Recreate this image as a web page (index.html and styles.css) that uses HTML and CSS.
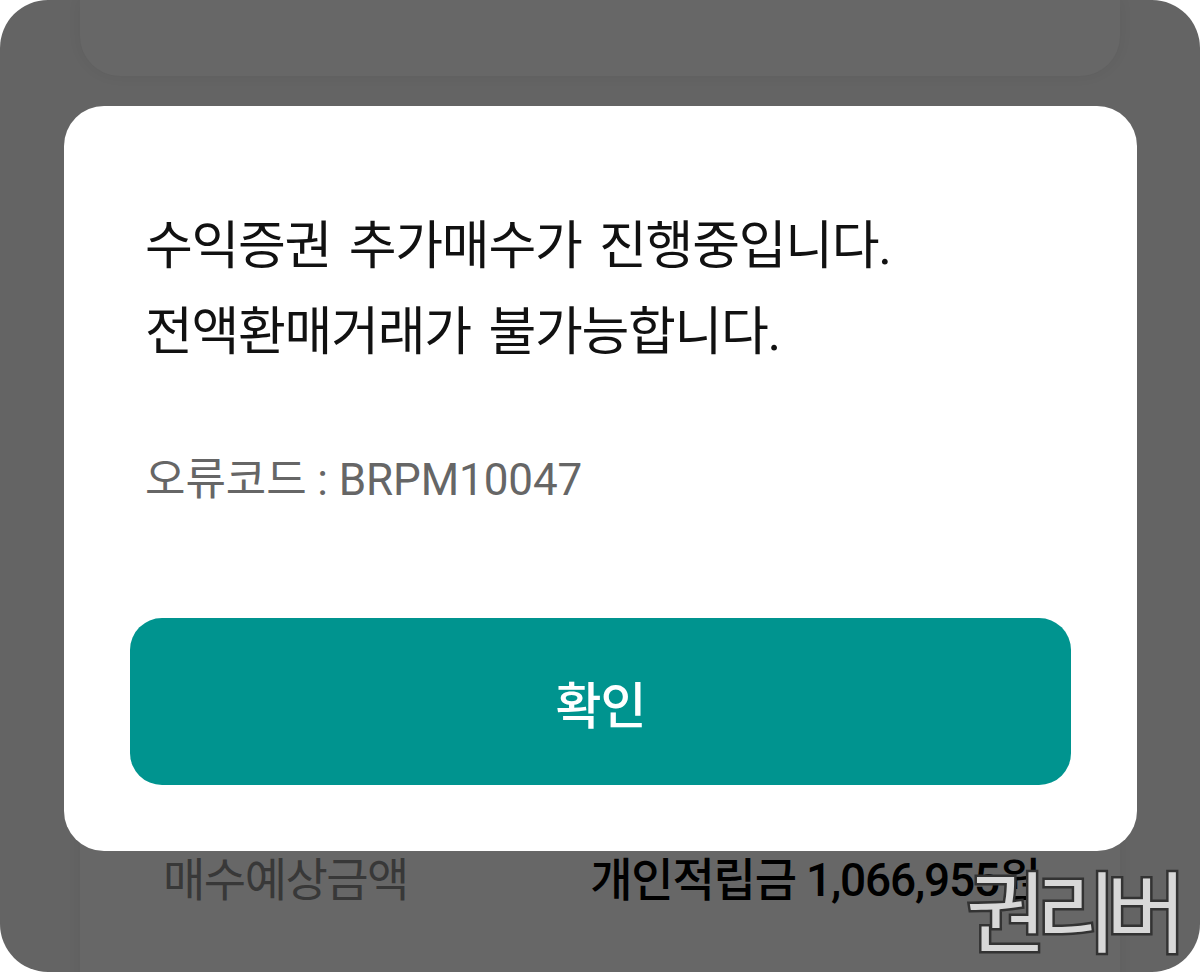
FILE: index.html
```html
<!DOCTYPE html>
<html lang="ko">
<head>
<meta charset="utf-8">
<link rel="stylesheet" href="styles.css">
</head>
<body>
<div class="screen">
  <div class="page">
    <div class="card card-top"></div>
    <div class="card card-bottom">
      <div class="row">
        <span class="row-label">매수예상금액</span>
        <span class="row-value">개인적립금 1,066,955원</span>
      </div>
    </div>
  </div>
  <div class="dialog">
    <div class="message">
      <p class="msg-line">수익증권 추가매수가 진행중입니다.</p>
      <p class="msg-line">전액환매거래가 불가능합니다.</p>
    </div>
    <p class="code">오류코드 : BRPM10047</p>
    <button class="btn">확인</button>
  </div>
  <div class="watermark">권리버</div>
</div>
</body>
</html>
```

FILE: styles.css
```css
* { box-sizing: border-box; }
html, body { margin: 0; padding: 0; background: #ffffff; }
body { font-family: Roboto, "Noto Sans CJK KR", sans-serif; }

.screen {
  position: relative;
  width: 1200px;
  height: 972px;
  background: #646464;
  border-radius: 48px;
  overflow: hidden;
}

.page {
  display: flex;
  flex-direction: column;
  padding: 0 80px;
  gap: 620px;
}

.card {
  background: #676767;
  box-shadow: 0 0 14px rgba(0, 0, 0, 0.06);
}

.card-top {
  height: 76px;
  border-radius: 0 0 40px 40px;
}

.card-bottom {
  height: 320px;
  border-radius: 40px;
  padding: 150px 80px 0 83px;
}

.row {
  display: flex;
  justify-content: space-between;
  align-items: center;
  height: 60px;
}

.row-label {
  font-size: 46px;
  color: #383838;
  letter-spacing: -1.5px;
}

.row-value {
  font-size: 46px;
  font-weight: 500;
  color: #000000;
  letter-spacing: -1.2px;
}

.dialog {
  position: absolute;
  left: 64px;
  top: 106px;
  width: 1073px;
  height: 745px;
  background: #ffffff;
  border-radius: 40px;
  padding: 98px 66px 66px 66px;
  display: flex;
  flex-direction: column;
}

.message {
  padding-left: 15px;
}

.msg-line {
  margin: 0;
  font-size: 52px;
  line-height: 86px;
  color: #111111;
  letter-spacing: -1.3px;
  word-spacing: 6px;
}

.code {
  margin: 78px 0 0 15px;
  font-size: 44px;
  line-height: 52px;
  color: #666666;
  letter-spacing: -0.1px;
}

.btn {
  margin-top: auto;
  height: 167px;
  border: none;
  border-radius: 32px;
  background: #00948f;
  color: #ffffff;
  font-family: Roboto, "Noto Sans CJK KR", sans-serif;
  font-size: 50px;
  font-weight: 500;
  letter-spacing: -1px;
}

.watermark {
  position: absolute;
  left: 966px;
  top: 852px;
  font-family: "Noto Sans CJK KR", sans-serif;
  font-size: 88px;
  line-height: 110px;
  letter-spacing: -11px;
  color: #d8d8d8;
  -webkit-text-stroke: 5px #333333;
  paint-order: stroke fill;
}
```
